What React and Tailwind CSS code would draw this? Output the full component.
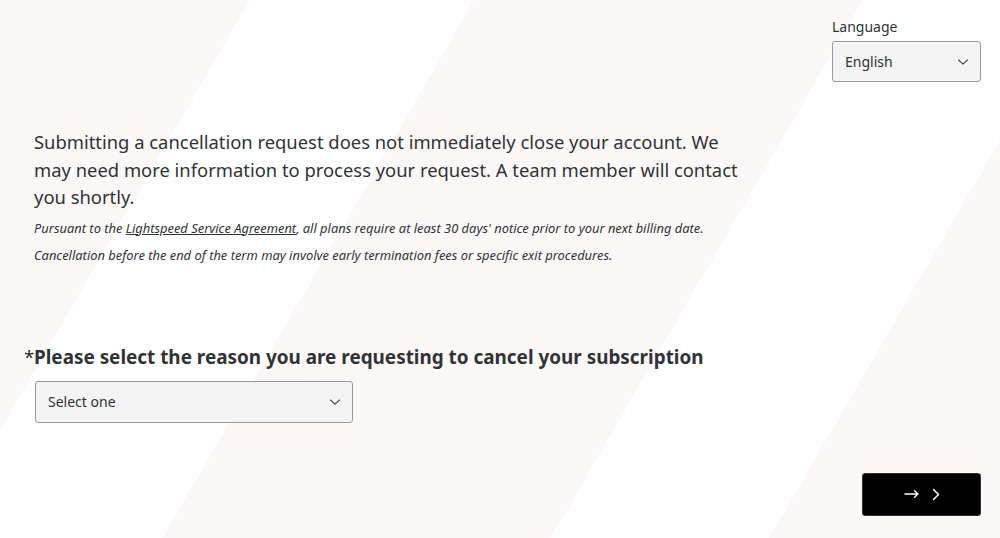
import { useState } from 'react';

const Chevron = ({ className }) => (
  <svg className={className} width="12" height="8" viewBox="0 0 12 8" fill="none">
    <path d="M1.5 2l4.5 4.2 4.5-4.2" stroke="#444" strokeWidth="1.1" strokeLinecap="round" strokeLinejoin="round" />
  </svg>
);

const Background = () => (
  <svg className="absolute inset-0 w-full h-full" viewBox="0 0 1000 538" preserveAspectRatio="none">
    <rect width="1000" height="538" fill="#ffffff" />
    <polygon points="0,0 250,0 0,431" fill="#fdf8f8" />
    <polygon points="474,0 863,0 551,538 162,538" fill="#fdf8f8" />
    <polygon points="1000,140 1000,538 769,538" fill="#fdf8f8" />
  </svg>
);

const App = () => {
  const [language, setLanguage] = useState('English');
  const [reason, setReason] = useState('');

  return (
    <div className="relative w-full h-[538px] overflow-hidden text-[#2f3336]" style={{ fontFamily: '"Noto Sans", "Open Sans", sans-serif' }}>
      <Background />
      <div className="relative flex flex-col h-full">
        <div className="flex justify-end pr-[19px] pt-[17px]">
          <div className="w-[149px]">
            <label className="block text-[14px] leading-[20px] mb-[4px]">Language</label>
            <div className="relative">
              <select
                value={language}
                onChange={e => setLanguage(e.target.value)}
                className="appearance-none w-full h-[41px] pl-[12px] pr-8 text-[14px] bg-[#f4f4f4] border border-[#9a9a9a] rounded-[3px] text-[#2f3336] outline-none"
              >
                <option>English</option>
                <option>Français</option>
                <option>Español</option>
              </select>
              <Chevron className="absolute right-[12px] top-[17px] pointer-events-none" />
            </div>
          </div>
        </div>

        <div className="pl-[34px] mt-[46px] w-[760px]">
          <p className="text-[18.4px] leading-[27.5px]">
            Submitting a cancellation request does not immediately close your account. We may need more information to process your request. A team member will contact you shortly.
          </p>
          <p className="italic text-[12.9px] leading-[18px] mt-[8px]">
            Pursuant to the <a href="#" className="underline">Lightspeed Service Agreement</a>, all plans require at least 30 days' notice prior to your next billing date.
          </p>
          <p className="italic text-[12.9px] leading-[18px] mt-[9px]">
            Cancellation before the end of the term may involve early termination fees or specific exit procedures.
          </p>
        </div>

        <div className="mt-[80px] pl-[24px]">
          <h2 className="flex text-[18.9px] leading-[26px] font-bold">
            <span className="w-[10px] font-normal">*</span>
            <span>Please select the reason you are requesting to cancel your subscription</span>
          </h2>
          <div className="relative w-[318px] mt-[11px] ml-[11px]">
            <select
              value={reason}
              onChange={e => setReason(e.target.value)}
              className="appearance-none w-full h-[42px] pl-[12px] pr-8 text-[14px] bg-[#f4f4f4] border border-[#9a9a9a] rounded-[3px] text-[#2f3336] outline-none"
            >
              <option value="">Select one</option>
              <option>Closing my business</option>
              <option>Switching providers</option>
              <option>Too expensive</option>
            </select>
            <Chevron className="absolute right-[12px] top-[17px] pointer-events-none" />
          </div>
        </div>

        <div className="flex justify-end pr-[19px] mt-[50px]">
          <button className="w-[119px] h-[43px] bg-black rounded-[3px] border border-[#333] text-white flex items-center justify-center gap-[12px]">
            <svg width="16" height="10" viewBox="0 0 16 10" fill="none">
              <path d="M1 5h13M10.5 1.8L14 5l-3.5 3.2" stroke="#fff" strokeWidth="1.4" strokeLinecap="round" strokeLinejoin="round" />
            </svg>
            <svg width="8" height="13" viewBox="0 0 8 13" fill="none">
              <path d="M1.5 1.5l5 5-5 5" stroke="#fff" strokeWidth="1.5" strokeLinecap="round" strokeLinejoin="round" />
            </svg>
          </button>
        </div>
      </div>
    </div>
  );
};

export default App;
